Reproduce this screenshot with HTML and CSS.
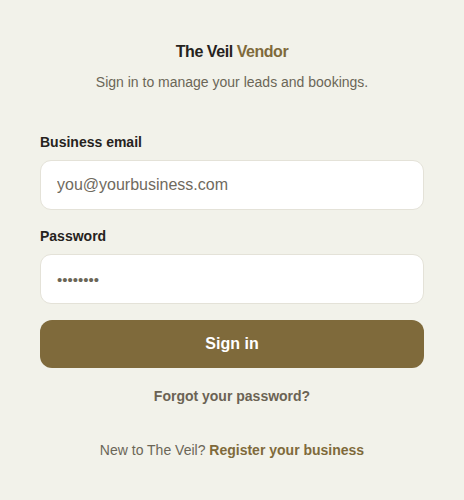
FILE: index.html
```html
<!DOCTYPE html>
<html lang="en">
<head>
<meta charset="utf-8">
<title>The Veil Vendor – Sign in</title>
<link rel="stylesheet" href="styles.css">
</head>
<body>
<main class="page">
  <header class="head">
    <h1 class="brand">The Veil <span class="brand-accent">Vendor</span></h1>
    <p class="subtitle">Sign in to manage your leads and bookings.</p>
  </header>
  <form class="form">
    <label class="label" for="email">Business email</label>
    <input class="field" id="email" type="email" placeholder="you@yourbusiness.com">
    <label class="label label-pw" for="pw">Password</label>
    <input class="field field-pw" id="pw" type="password" value="password">
    <button class="btn" type="button">Sign in</button>
  </form>
  <a class="forgot" href="#">Forgot your password?</a>
  <p class="register">New to The Veil? <a class="register-link" href="#">Register your business</a></p>
</main>
</body>
</html>
```
FILE: styles.css
```css
* { box-sizing: border-box; }
html, body { margin: 0; }
body {
  background: #f2f2ea;
  font-family: "Liberation Sans", Arial, sans-serif;
  color: #26231d;
}
.page {
  padding: 42px 40px 0;
  display: flex;
  flex-direction: column;
}
.head { text-align: center; }
.brand {
  margin: 0;
  font-size: 16px;
  line-height: 20px;
  font-weight: 700;
  letter-spacing: -0.45px;
  color: #26231d;
}
.brand-accent { color: #7f6a3b; }
.subtitle {
  margin: 10px 0 0;
  font-size: 14px;
  line-height: 20px;
  color: #6b6657;
}
.form {
  margin-top: 40px;
  display: flex;
  flex-direction: column;
}
.label {
  font-size: 14px;
  line-height: 20px;
  font-weight: 700;
  color: #26231d;
}
.label-pw { margin-top: 16px; }
.field {
  margin-top: 8px;
  height: 50px;
  width: 100%;
  border: 1px solid #e4e2d8;
  border-radius: 11px;
  background: #ffffff;
  padding: 0 16px;
  font-family: "Liberation Sans", Arial, sans-serif;
  font-size: 16px;
  color: #6b6657;
  outline: none;
}
.field::placeholder { color: #6f6a5e; }
.field-pw { font-size: 15px; }
.btn {
  margin-top: 16px;
  height: 48px;
  border: 0;
  border-radius: 12px;
  background: #7f6a3b;
  color: #ffffff;
  font-family: "Liberation Sans", Arial, sans-serif;
  font-size: 16px;
  font-weight: 700;
  cursor: pointer;
}
.forgot {
  margin-top: 18px;
  align-self: center;
  font-size: 14px;
  line-height: 20px;
  font-weight: 700;
  color: #6b6354;
  text-decoration: none;
}
.register {
  margin: 34px 0 0;
  text-align: center;
  font-size: 14px;
  line-height: 20px;
  color: #6b6657;
}
.register-link {
  font-weight: 700;
  color: #7f6a3b;
  text-decoration: none;
}
```
